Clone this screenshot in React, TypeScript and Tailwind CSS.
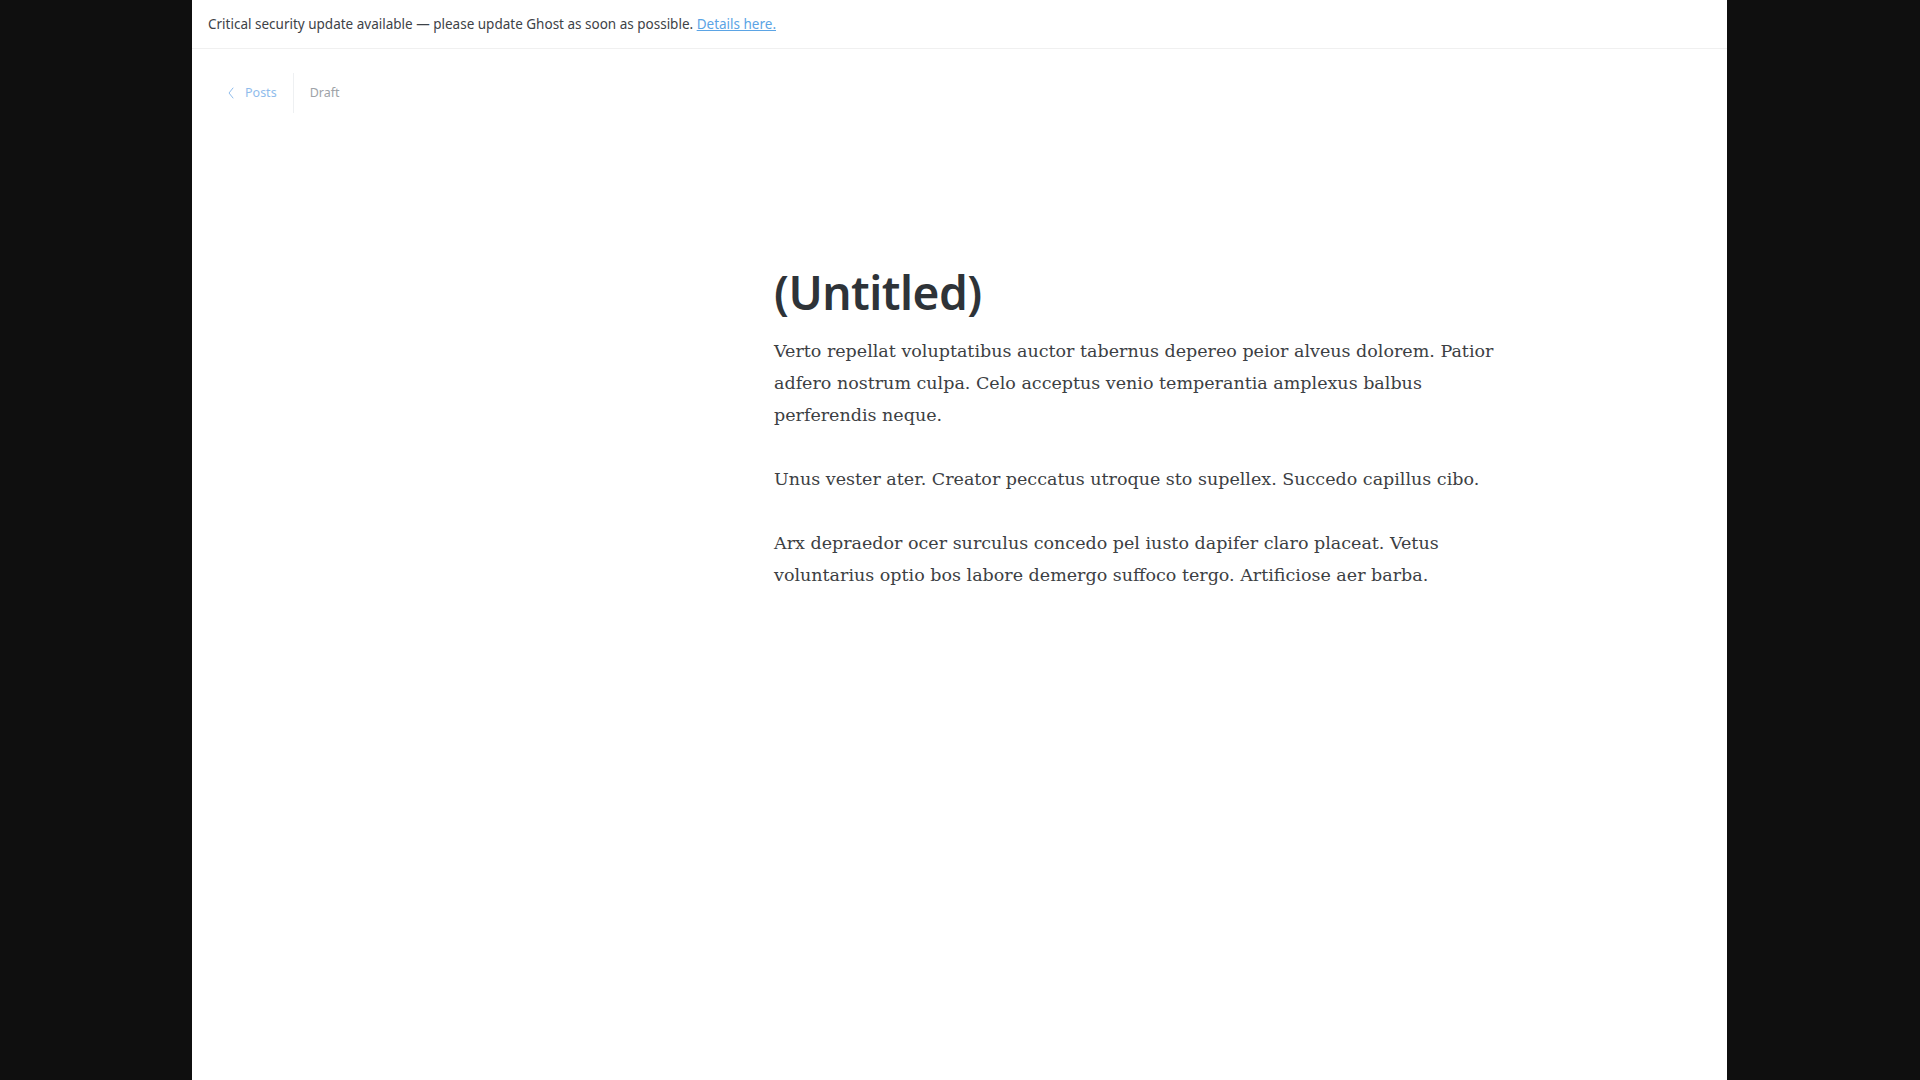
const SANS = "font-['Noto_Sans','Open_Sans',sans-serif]";

function Chevron() {
  return (
    <svg width="6" height="12" viewBox="0 0 6 12" fill="none" className="shrink-0">
      <polyline points="5,1 1,6 5,11" stroke="currentColor" strokeWidth="1" strokeLinecap="round" strokeLinejoin="round" />
    </svg>
  );
}

export default function App() {
  return (
    <div className="min-h-screen w-full bg-[#0f0f0f]">
      <div className={`ml-[192px] w-[1535px] min-h-screen bg-white ${SANS}`}>
        {/* update banner */}
        <div className="flex h-[49px] items-center border-b border-[#f0f0f0] px-4 text-[13.5px] text-[#3d4247]">
          <span>
            Critical security update available — please update Ghost as soon as possible.{" "}
            <a href="#" className="text-[#5ba4e5] underline">
              Details here.
            </a>
          </span>
        </div>

        {/* breadcrumb */}
        <div className="mt-[24px] flex h-[40px] items-center pl-[36px] text-[12.5px]">
          <a href="#" className="flex items-center gap-[11px] pr-[16px] text-[#8fbcec]">
            <Chevron />
            Posts
          </a>
          <div className="h-[40px] w-px bg-[#eef0f2]" />
          <span className="pl-[16px] text-[#9ea3a8]">Draft</span>
        </div>

        {/* editor */}
        <div className="pl-[582px] pt-[154px]">
          <h1 className="text-[46px] font-semibold leading-[1.1] tracking-[-0.5px] text-[#2e3338]">
            (Untitled)
          </h1>
          <div className="mt-[17px] max-w-[740px] font-['DejaVu_Serif',serif] text-[17.5px] leading-[32px] text-[#3c4043]">
            <p>
              Verto repellat voluptatibus auctor tabernus depereo peior alveus dolorem. Patior adfero nostrum culpa. Celo acceptus venio temperantia amplexus balbus perferendis neque.
            </p>
            <p className="mt-[32px]">
              Unus vester ater. Creator peccatus utroque sto supellex. Succedo capillus cibo.
            </p>
            <p className="mt-[32px]">
              Arx depraedor ocer surculus concedo pel iusto dapifer claro placeat. Vetus voluntarius optio bos labore demergo suffoco tergo. Artificiose aer barba.
            </p>
          </div>
        </div>
      </div>
    </div>
  );
}
